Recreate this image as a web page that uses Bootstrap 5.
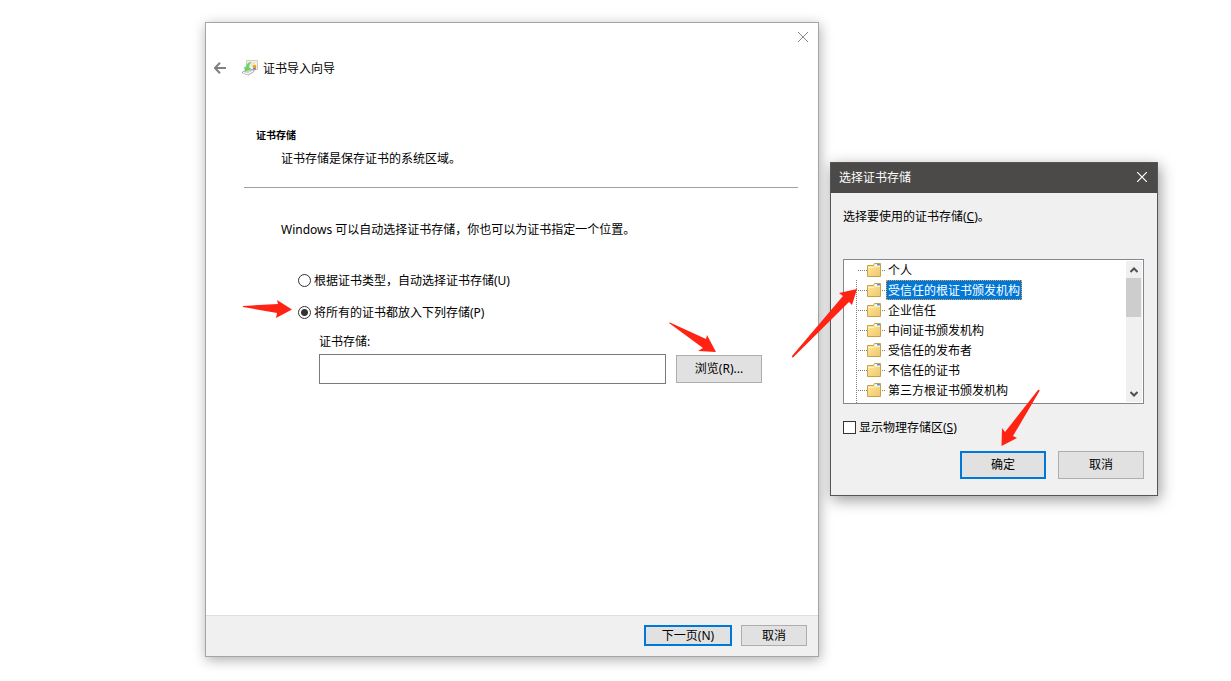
<!DOCTYPE html>
<html lang="zh-CN">
<head>
<meta charset="utf-8">
<meta name="viewport" content="width=device-width, initial-scale=1">
<title>证书导入向导</title>
<link href="https://cdn.jsdelivr.net/npm/bootstrap@5.3.0/dist/css/bootstrap.min.css" rel="stylesheet">
<style>
  body { font-family: "Noto Sans", "Noto Sans CJK SC", sans-serif; font-size: 12px; line-height: 16px; color: #000; background: #fff; }
  .desktop { min-height: 100vh; padding: 22px 73px 24px 205px; gap: 11px; }
  .wizard { flex: 614 1 614px; min-width: 0; background: #fff; border: 1px solid #a5a5a5; box-shadow: 1px 3px 12px rgba(0,0,0,.32); }
  .picker { flex: 328 1 328px; min-width: 0; margin-top: 140px; background: #f0f0f0; border: 1px solid #555; box-shadow: 2px 4px 14px rgba(0,0,0,.4); }
  .picker-title { height: 30px; background: #4c4a48; color: #fff; padding: 0 10px 0 8px; }
  .picker-title .bare { padding-bottom: 2px; }
  .picker-body { padding: 16px 13px 16px 12px; }
  .bare { background: none; border: 0; padding: 0; line-height: 0; color: inherit; }
  .wizard-top { height: 28px; padding: 0 10px; color: #8a8a8a; }
  .wizard-name { height: 34px; padding-left: 8px; }
  .wizard-name span, .option label, .physical label { padding-top: 2px; }
  .step-head { padding: 42px 20px 0 38px; }
  .step-head h1 { font-size: 10px; line-height: 16px; font-weight: 700; margin: 0 0 8px 12px; }
  .step-head p { margin: 0 0 20px 37px; }
  .rule { border-top: 1px solid #a0a0a0; }
  .step-body { padding: 34px 56px 0 75px; }
  .options { padding: 0 0 0 17px; margin-top: 34px; }
  .option { gap: 3px; height: 16px; }
  .option + .option { margin-top: 16px; }
  .win-radio, .win-check { appearance: none; flex: none; width: 13px; height: 13px; margin: 0; background: #fff; border: 1px solid #333; }
  .win-radio { border-radius: 50%; }
  .win-radio:checked { background: radial-gradient(circle, #333 0 3px, #fff 4px); }
  .store { padding-left: 21px; margin-top: 14px; }
  .store label { display: block; margin-bottom: 4px; }
  .store-row { gap: 10px; }
  .store-box { min-width: 0; height: 30px; border: 1px solid #7a7a7a; padding: 2px 6px; background: #fff; }
  .win-btn { --bs-btn-font-size: 12px; --bs-btn-line-height: 16px; --bs-btn-padding-y: 0; --bs-btn-padding-x: 0; --bs-btn-border-radius: 0; --bs-btn-bg: #e1e1e1; --bs-btn-border-color: #adadad; --bs-btn-color: #000; --bs-btn-hover-bg: #e5f1fb; --bs-btn-hover-color: #000; --bs-btn-hover-border-color: #0078d7; width: 86px; height: 28px; flex: none; }
  .win-btn.primary { border: 2px solid #0078d7; }
  .wizard-foot { border-top: 1px solid #dfdfdf; background: #f0f0f0; height: 41px; padding: 0 11px 2px 0; gap: 9px; }
  .wizard-foot .win-btn { width: 66px; height: 21px; padding-top: 1px; }
  .wizard-foot .win-btn.primary { width: 88px; }
  .tree { height: 145px; margin-top: 34px; background: #fff; border: 1px solid #828790; }
  .tree-view { overflow: hidden; padding-left: 12px; }
  .tree-list { height: 100%; background: linear-gradient(#808080 50%, transparent 50%) 0 0 / 1px 2px repeat-y; }
  .tree-list li { height: 20px; gap: 5px; background: linear-gradient(90deg, #808080 50%, transparent 50%) 0 10px / 2px 1px repeat-x; }
  .tree-list li:first-child { box-shadow: inset 1px 10px #fff; }
  .tree-list li > svg { margin-left: 11px; flex: none; }
  .tree-list .cell { background: #fff; height: 20px; }
  .tree-list .node { display: inline-block; height: 20px; line-height: 19px; padding: 0 1px; border: 1px solid transparent; white-space: nowrap; color: #000; text-decoration: none; vertical-align: top; }
  .tree-list .node.chosen { background: #0078d7; color: #fff; border: 1px dotted #ff9a3c; outline: 0; }
  .bar { width: 16px; margin: 1px; background: #f0f0f0; color: #505050; }
  .thumb { height: 39px; width: 15px; background: #cdcdcd; }
  .bar .bare { width: 16px; height: 17px; }
  .physical { gap: 3px; margin-top: 14px; height: 18px; }
  .actions { gap: 12px; margin-top: 15px; }
  .pointer { position: absolute; fill: #ff2314; pointer-events: none; z-index: 3; overflow: visible; }
  .p-option { left: -56px; top: -3px; }
  .p-browse { left: -8px; top: -33px; }
  .p-tree { left: -53px; top: 28px; }
  .p-ok { left: 40px; top: -62px; }
</style>
</head>
<body>
<svg class="position-absolute" width="0" height="0" aria-hidden="true">
  <defs><linearGradient id="paper" x2="1" y2="1"><stop stop-color="#ffe99b"/><stop offset="1" stop-color="#f0c66c"/></linearGradient></defs>
  <symbol id="folder" viewBox="0 0 14 14">
    <path d="M.5 2.500h6l1-2h6v13H.5z" fill="url(#paper)" stroke="#c9a14b"/>
    <path d="M8 1h5v2H7z" fill="#fff6d8"/><path d="M10 1h3v1.500h-3z" fill="#4b9be8"/>
    <path d="M1 4.500h6l1-1h5" fill="none" stroke="#fff2b8"/>
  </symbol>
</svg>
<main class="desktop d-flex align-items-stretch">
  <section class="wizard d-flex flex-column">
    <div class="wizard-top d-flex align-items-center justify-content-end">
      <button class="bare" type="button" aria-label="关闭"><svg width="10" height="10" viewBox="0 0 10 10" fill="none" stroke="currentColor"><path d="M0 0l10 10M10 0L0 10"/></svg></button>
    </div>
    <div class="wizard-name d-flex align-items-center">
      <button class="bare me-3" type="button" aria-label="返回"><svg width="12" height="12" viewBox="0 0 12 12" fill="none" stroke="#808080" stroke-width="2"><path d="M12 6H1M6 .8L1 6l5 5.200"/></svg></button>
      <svg class="me-1" width="17" height="17" viewBox="0 0 17 17">
        <path d="M4.500 .5h11v9h-11z" fill="#f4f0e2" stroke="#d3ccb8"/>
        <path d="M8 3h5M9 5h2" stroke="#ded8c8"/>
        <path d="M11.500 7l-.5 3 1.500-1 1.500 1-.5-3z" fill="#4a73b8"/><circle cx="12.500" cy="6.500" r="1.800" fill="#eda31c"/>
        <path d="M.5 12l4-2 8-.5-.5 2-5.500 3.500L.5 13z" fill="#d4d6d7" stroke="#9a9d9f" stroke-width=".8"/>
        <path d="M1 12.500l5 1.500 5-3" fill="none" stroke="#fff"/>
        <path d="M9 2C6 2.500 4.500 4.500 4.300 7L2.300 7.200 3.500 11.500 8.500 8.500 6.800 7.500C7 5.500 7.500 3.500 9 2z" fill="#5bdc5b" stroke="#7fc878" stroke-width=".6"/>
      </svg>
      <span>证书导入向导</span>
    </div>
    <div class="step-head">
      <h1>证书存储</h1>
      <p>证书存储是保存证书的系统区域。</p>
      <div class="rule"></div>
    </div>
    <form class="step-body flex-fill">
      <p class="m-0">Windows 可以自动选择证书存储，你也可以为证书指定一个位置。</p>
      <div class="options">
        <div class="option d-flex align-items-center">
          <input class="win-radio" type="radio" name="mode" id="auto"><label for="auto">根据证书类型，自动选择证书存储(U)</label>
        </div>
        <div class="option d-flex align-items-center position-relative">
          <input class="win-radio" type="radio" name="mode" id="manual" checked><label for="manual">将所有的证书都放入下列存储(P)</label>
          <svg class="pointer p-option" width="50" height="18" viewBox="0 0 50 18"><path d="M1 5L36 3 35-1 50 8.500 34 17 35 12 1 6z"/></svg>
        </div>
        <div class="store">
          <label for="store">证书存储:</label>
          <div class="store-row d-flex align-items-center">
            <input class="store-box flex-fill" type="text" id="store">
            <div class="position-relative">
              <button class="btn win-btn" type="button">浏览(R)...</button>
              <svg class="pointer p-browse" width="49" height="30" viewBox="0 0 49 30"><path d="M1 1Q2 0 3 1L38 17 39 13 48 30 30 29 35 26z"/></svg>
            </div>
          </div>
        </div>
      </div>
    </form>
    <div class="wizard-foot d-flex align-items-center justify-content-end">
      <button class="btn win-btn primary" type="button">下一页(N)</button>
      <button class="btn win-btn" type="button">取消</button>
    </div>
  </section>

  <section class="picker align-self-start">
    <div class="picker-title d-flex align-items-center justify-content-between">
      <span>选择证书存储</span>
      <button class="bare" type="button" aria-label="关闭"><svg width="10" height="10" viewBox="0 0 10 10" fill="none" stroke="currentColor" stroke-width="1.200"><path d="M0 0l10 10M10 0L0 10"/></svg></button>
    </div>
    <div class="picker-body">
      <p class="m-0">选择要使用的证书存储(<u>C</u>)。</p>
      <div class="tree d-flex position-relative">
        <div class="tree-view flex-fill">
          <ul class="tree-list list-unstyled m-0">
            <li class="d-flex align-items-center"><svg width="14" height="14"><use href="#folder"/></svg><span class="cell flex-fill"><a class="node" href="#">个人</a></span></li>
            <li class="d-flex align-items-center"><svg width="14" height="14"><use href="#folder"/></svg><span class="cell flex-fill"><a class="node chosen" href="#">受信任的根证书颁发机构</a></span></li>
            <li class="d-flex align-items-center"><svg width="14" height="14"><use href="#folder"/></svg><span class="cell flex-fill"><a class="node" href="#">企业信任</a></span></li>
            <li class="d-flex align-items-center"><svg width="14" height="14"><use href="#folder"/></svg><span class="cell flex-fill"><a class="node" href="#">中间证书颁发机构</a></span></li>
            <li class="d-flex align-items-center"><svg width="14" height="14"><use href="#folder"/></svg><span class="cell flex-fill"><a class="node" href="#">受信任的发布者</a></span></li>
            <li class="d-flex align-items-center"><svg width="14" height="14"><use href="#folder"/></svg><span class="cell flex-fill"><a class="node" href="#">不信任的证书</a></span></li>
            <li class="d-flex align-items-center"><svg width="14" height="14"><use href="#folder"/></svg><span class="cell flex-fill"><a class="node" href="#">第三方根证书颁发机构</a></span></li>
          </ul>
        </div>
        <div class="bar d-flex flex-column flex-shrink-0">
          <button class="bare" type="button" aria-label="向上"><svg width="8" height="6" viewBox="0 0 8 6" fill="none" stroke="currentColor" stroke-width="2"><path d="M.5 5L4 1.500 7.500 5"/></svg></button>
          <div class="thumb mb-auto"></div>
          <button class="bare" type="button" aria-label="向下"><svg width="8" height="6" viewBox="0 0 8 6" fill="none" stroke="currentColor" stroke-width="2"><path d="M.5 1L4 4.500 7.500 1"/></svg></button>
        </div>
        <svg class="pointer p-tree" width="66" height="69" viewBox="0 0 66 69"><path d="M1 68L52 8 48 5 66 1 61 17 58 14 2 69.500Q1 70 1 68z"/></svg>
      </div>
      <div class="physical d-flex align-items-center">
        <input class="win-check" type="checkbox" id="phys"><label for="phys">显示物理存储区(<u>S</u>)</label>
      </div>
      <div class="actions d-flex justify-content-end">
        <div class="position-relative">
          <button class="btn win-btn primary" type="button">确定</button>
          <svg class="pointer p-ok" width="40" height="58" viewBox="0 0 40 58"><path d="M38 1Q40 0 39.500 2L13 47 17 49 1.500 57 2 39 5 43z"/></svg>
        </div>
        <button class="btn win-btn" type="button">取消</button>
      </div>
    </div>
  </section>
</main>
<script src="https://cdn.jsdelivr.net/npm/bootstrap@5.3.0/dist/js/bootstrap.bundle.min.js"></script>
</body>
</html>
